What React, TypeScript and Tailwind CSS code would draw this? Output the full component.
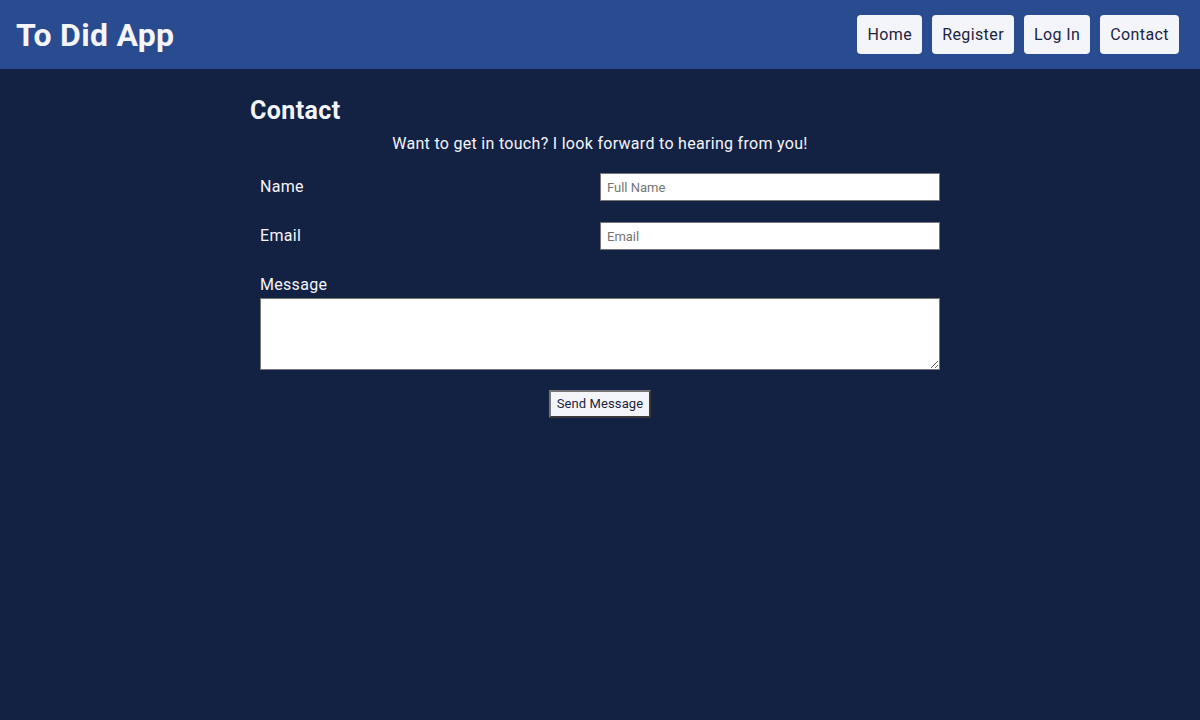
import React from 'react';

const NAV = ['Home', 'Register', 'Log In', 'Contact'];

export default function App() {
  return (
    <div className="min-h-[720px] bg-[#132143] font-['Roboto',sans-serif] text-[#f4f5fb]">
      <header className="flex h-[69px] items-center justify-between bg-[#294b8f] pl-4 pr-[21px]">
        <h1 className="text-[32px] font-bold tracking-[0.3px]">To Did App</h1>
        <nav className="flex gap-[10px]">
          {NAV.map((n) => (
            <button
              key={n}
              className="h-[39px] rounded-[4px] bg-[#f4f5fb] px-[10px] text-[16px] tracking-[0.4px] text-[#1b2440]"
            >
              {n}
            </button>
          ))}
        </nav>
      </header>

      <main className="mx-auto w-[700px] pt-[28px]">
        <h2 className="text-[25px] font-bold leading-[28px] tracking-[0.4px]">Contact</h2>
        <p className="mt-[7px] text-center text-[16px] leading-[24px] tracking-[0.3px]">
          Want to get in touch? I look forward to hearing from you!
        </p>

        <form className="px-[10px]" onSubmit={(e) => e.preventDefault()}>
          <div className="mt-[17px] grid grid-cols-2 items-center">
            <label className="text-[16px] tracking-[0.3px]">Name</label>
            <input
              placeholder="Full Name"
              className="h-[28px] border border-[#767676] bg-white px-[6px] text-[13px] text-black placeholder:text-[#757575]"
            />
          </div>
          <div className="mt-[21px] grid grid-cols-2 items-center">
            <label className="text-[16px] tracking-[0.3px]">Email</label>
            <input
              placeholder="Email"
              className="h-[28px] border border-[#767676] bg-white px-[6px] text-[13px] text-black placeholder:text-[#757575]"
            />
          </div>
          <label className="mt-[23px] block text-[16px] leading-[24px] tracking-[0.3px]">Message</label>
          <textarea className="mt-px block h-[72px] w-full border border-[#767676] bg-white text-black" />
          <div className="mt-[20px] flex justify-center">
            <button className="h-[28px] border-2 border-t-[#767676] border-l-[#767676] border-b-[#3a3a3a] border-r-[#3a3a3a] bg-[#f4f5fb] px-[6px] text-[13px] tracking-[0.1px] text-[#1b2440]">
              Send Message
            </button>
          </div>
        </form>
      </main>
    </div>
  );
}
